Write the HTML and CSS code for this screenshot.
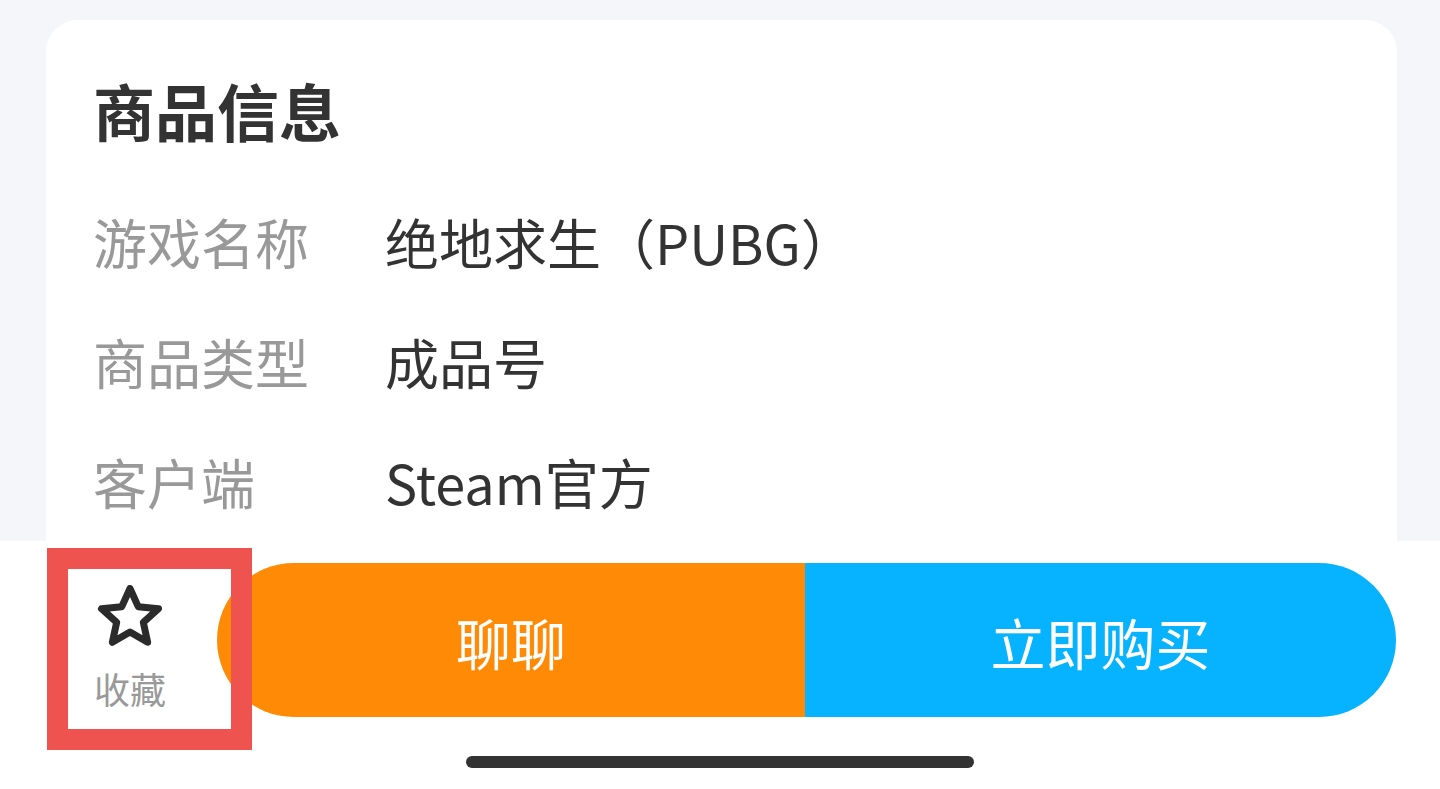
FILE: index.html
```html
<!DOCTYPE html>
<html lang="zh-CN">
<head>
<meta charset="utf-8">
<title>商品信息</title>
<link rel="stylesheet" href="styles.css">
</head>
<body>
<div class="page">
  <main class="content">
    <section class="card">
      <h1 class="title">商品信息</h1>
      <div class="row"><span class="label">游戏名称</span><span class="value">绝地求生（PUBG）</span></div>
      <div class="row"><span class="label">商品类型</span><span class="value">成品号</span></div>
      <div class="row"><span class="label">客户端</span><span class="value">Steam官方</span></div>
    </section>
  </main>
  <footer class="bar">
    <div class="fav">
      <svg class="star" width="70" height="64" viewBox="0 0 70 64" aria-hidden="true">
        <polygon points="35,3.5 43.23,21.67 63.53,23.73 48.31,37.33 52.63,57.27 35,47 17.37,57.27 21.69,37.33 6.47,23.73 26.77,21.67" fill="none" stroke="#2b2b2b" stroke-width="7" stroke-linejoin="round"/>
      </svg>
      <span class="fav-text">收藏</span>
    </div>
    <div class="actions">
      <button class="btn btn-chat">聊聊</button>
      <button class="btn btn-buy">立即购买</button>
    </div>
    <div class="highlight"></div>
    <div class="home-indicator"></div>
  </footer>
</div>
</body>
</html>
```
FILE: styles.css
```css
* { box-sizing: border-box; }
html, body {
  margin: 0;
  padding: 0;
}
body {
  width: 1440px;
  height: 789px;
  overflow: hidden;
  background: #f5f6fa;
  font-family: "Noto Sans CJK SC", "Noto Sans", sans-serif;
}
.page {
  display: flex;
  flex-direction: column;
  height: 789px;
}
.content {
  height: 541px;
  padding: 20px 43px 0 46px;
  overflow: hidden;
}
.card {
  background: #ffffff;
  height: 560px;
  border-radius: 32px 32px 0 0;
  padding: 50px 0 0 47px;
}
.title {
  margin: 0 0 32px 0;
  font-size: 62px;
  line-height: 80px;
  font-weight: 700;
  color: #333333;
}
.row {
  display: flex;
  height: 120px;
  align-items: center;
  font-size: 54px;
  line-height: 120px;
}
.label {
  width: 292px;
  color: #999999;
}
.value {
  color: #333333;
}
.bar {
  position: relative;
  flex: 1;
  background: #ffffff;
  display: flex;
  align-items: flex-start;
  padding: 22px 44px 0 56px;
  gap: 13px;
}
.fav {
  width: 148px;
  margin-top: 22px;
  display: flex;
  flex-direction: column;
  align-items: center;
}
.star {
  display: block;
}
.fav-text {
  margin-top: 19px;
  font-size: 36px;
  line-height: 40px;
  color: #999999;
}
.actions {
  flex: 1;
  display: flex;
  height: 154px;
  border-radius: 77px;
  overflow: hidden;
}
.btn {
  border: 0;
  margin: 0;
  padding: 2px 0 0 0;
  font-family: "Noto Sans CJK SC", "Noto Sans", sans-serif;
  font-size: 55px;
  color: #ffffff;
  line-height: 150px;
}
.btn-chat {
  width: 588px;
  flex: none;
  background: #ff8a05;
}
.btn-buy {
  flex: 1;
  background: #07b3fe;
}
.highlight {
  position: absolute;
  left: 47px;
  top: 7px;
  width: 205px;
  height: 202px;
  border: 21px solid #ef5350;
}
.home-indicator {
  position: absolute;
  left: 466px;
  top: 215px;
  width: 508px;
  height: 12px;
  border-radius: 6px;
  background: #333333;
}
```
